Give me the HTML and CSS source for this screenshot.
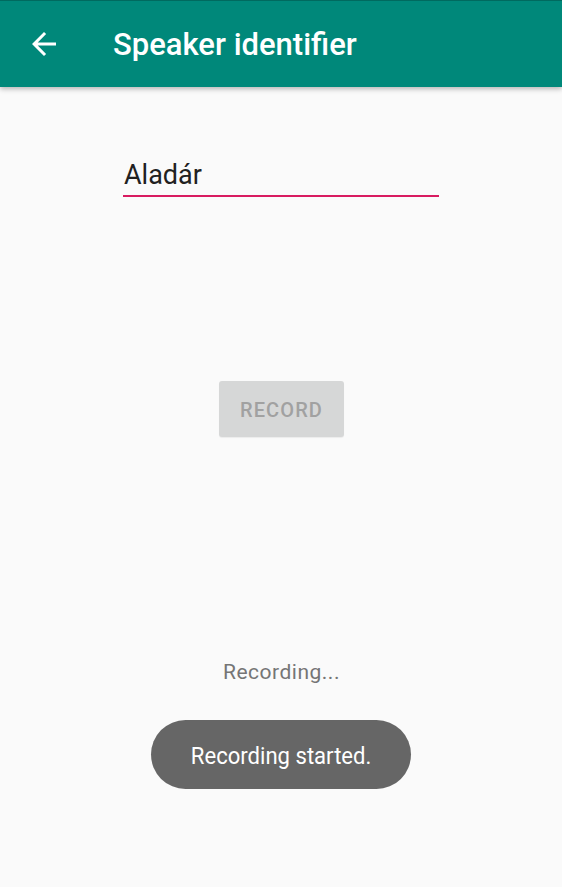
FILE: index.html
```html
<!DOCTYPE html>
<html>
<head>
<meta charset="utf-8">
<link rel="stylesheet" href="styles.css">
</head>
<body>
<header class="appbar">
  <svg class="back" viewBox="0 0 24 24" width="36" height="36"><path fill="#fff" d="M20 11H7.83l5.59-5.59L12 4l-8 8 8 8 1.41-1.41L7.83 13H20v-2z"/></svg>
  <h1 class="title">Speaker identifier</h1>
</header>
<main class="content">
  <div class="field">
    <div class="field-text">Aladár</div>
    <div class="field-line"></div>
  </div>
  <button class="record">RECORD</button>
  <div class="status">Recording...</div>
  <div class="toast"><span class="toast-text">Recording started.</span></div>
</main>
</body>
</html>
```
FILE: styles.css
```css
html, body {
  margin: 0;
  padding: 0;
  background: #fafafa;
  font-family: Roboto, "Noto Sans", sans-serif;
}
.appbar {
  height: 86px;
  border-top: 1px solid #006a5f;
  background: #00887a;
  display: flex;
  align-items: center;
  box-shadow: 0 2px 5px rgba(0,0,0,0.28);
  position: relative;
}
.back {
  margin-left: 26px;
  flex: none;
}
.title {
  margin: 0 0 0 51px;
  color: #fff;
  font-size: 31px;
  font-weight: 500;
  letter-spacing: 0;
}
.content {
  display: flex;
  flex-direction: column;
  align-items: center;
}
.field {
  margin-top: 73px;
  align-self: flex-start;
  margin-left: 123px;
  width: 316px;
}
.field-text {
  font-size: 27px;
  line-height: 30px;
  color: #212121;
  padding-left: 1px;
}
.field-line {
  margin-top: 5px;
  height: 2px;
  background: #d81b60;
}
.record {
  margin-top: 184px;
  width: 125px;
  height: 56px;
  border: none;
  border-radius: 3px;
  background: #d6d7d7;
  color: #a1a1a1;
  font-family: Roboto, sans-serif;
  font-size: 20px;
  font-weight: 500;
  letter-spacing: 1.1px;
  padding: 2px 0 0;
  margin-left: 1px;
  box-shadow: 0 1px 1px rgba(0,0,0,0.06);
}
.status {
  margin-top: 223px;
  font-size: 21px;
  line-height: 24px;
  letter-spacing: 0.5px;
  color: #757575;
  margin-left: 1px;
}
.toast {
  margin-top: 36px;
  width: 260px;
  height: 69px;
  border-radius: 35px;
  background: #666666;
  color: #fff;
  display: flex;
  align-items: center;
  justify-content: center;
}
.toast-text {
  display: inline-block;
  font-size: 24px;
  padding-top: 2px;
  transform: scaleX(0.92);
  white-space: nowrap;
}
```
